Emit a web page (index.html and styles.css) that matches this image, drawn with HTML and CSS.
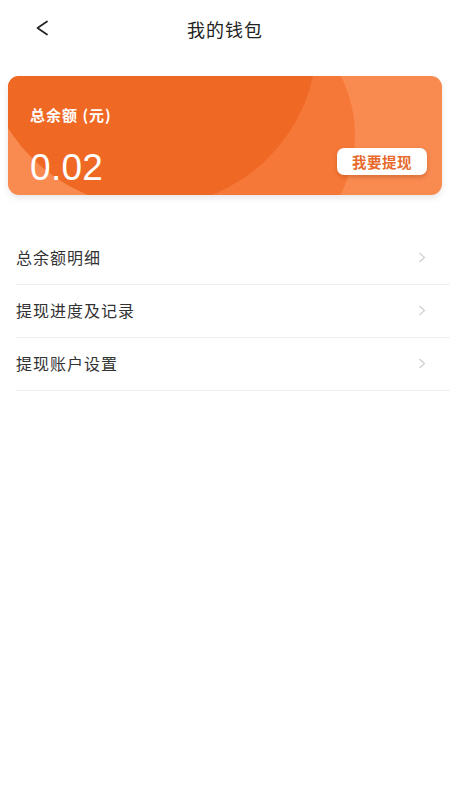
FILE: index.html
```html
<!DOCTYPE html>
<html lang="zh">
<head>
<meta charset="utf-8">
<title>我的钱包</title>
<link rel="stylesheet" href="styles.css">
</head>
<body>
<div class="page">
  <header class="topbar">
    <span class="back">
      <svg width="14" height="16" viewBox="0 0 14 16"><path d="M12 1.5 L2.5 8 L12 14.5" fill="none" stroke="#222" stroke-width="1.7" stroke-linecap="round" stroke-linejoin="round"/></svg>
    </span>
    <h1 class="title">我的钱包</h1>
  </header>

  <section class="card">
    <div class="blob blob-light"></div>
    <div class="blob blob-dark"></div>
    <div class="card-body">
      <div class="label">总余额 (元)</div>
      <div class="row-bottom">
        <div class="amount">0.02</div>
        <button class="withdraw">我要提现</button>
      </div>
    </div>
  </section>

  <ul class="menu">
    <li class="item"><span>总余额明细</span><svg class="arrow" width="8" height="11" viewBox="0 0 8 11"><path d="M1.5 1 L6.5 5.5 L1.5 10" fill="none" stroke="#cccccc" stroke-width="1.1"/></svg></li>
    <li class="item"><span>提现进度及记录</span><svg class="arrow" width="8" height="11" viewBox="0 0 8 11"><path d="M1.5 1 L6.5 5.5 L1.5 10" fill="none" stroke="#cccccc" stroke-width="1.1"/></svg></li>
    <li class="item"><span>提现账户设置</span><svg class="arrow" width="8" height="11" viewBox="0 0 8 11"><path d="M1.5 1 L6.5 5.5 L1.5 10" fill="none" stroke="#cccccc" stroke-width="1.1"/></svg></li>
  </ul>
</div>
</body>
</html>
```

FILE: styles.css
```css
* { box-sizing: border-box; }
html, body { margin: 0; padding: 0; background: #fff; }
body {
  font-family: "Noto Sans CJK SC", "Noto Sans", "Liberation Sans", sans-serif;
  color: #222;
}
.page { width: 450px; min-height: 800px; }

.topbar {
  height: 57px;
  display: flex;
  align-items: center;
  justify-content: center;
  position: relative;
}
.back {
  position: absolute;
  left: 35px;
  top: 20px;
  display: flex;
}
.title {
  margin: 0;
  font-size: 18px;
  font-weight: 400;
  color: #222;
  letter-spacing: 1px;
}

.card {
  margin: 19px 8px 0;
  height: 119px;
  border-radius: 11px;
  background: #f98b51;
  position: relative;
  overflow: hidden;
  box-shadow: 0 3px 6px rgba(120, 120, 140, 0.18);
}
.blob {
  position: absolute;
  border-radius: 50%;
}
.blob-light {
  width: 260px; height: 260px;
  left: 87px; top: -71px;
  background: #f67838;
}
.blob-dark {
  width: 334px; height: 334px;
  left: -25px; top: -203px;
  background: #ef6824;
}
.card-body {
  position: relative;
  height: 100%;
  padding: 29px 15px 0 22px;
  display: flex;
  flex-direction: column;
}
.label {
  color: #fff;
  font-size: 15px;
  font-weight: 700;
  line-height: 20px;
  letter-spacing: 1px;
}
.row-bottom {
  margin-top: 22px;
  display: flex;
  align-items: center;
  justify-content: space-between;
}
.amount {
  font-family: "Liberation Sans", Arial, sans-serif;
  color: #fff;
  font-size: 37px;
  line-height: 42px;
  letter-spacing: 0.3px;
}
.withdraw {
  width: 90px;
  height: 27px;
  border: none;
  border-radius: 7px;
  background: #fff;
  color: #e76a2c;
  font-family: "Noto Sans CJK SC", sans-serif;
  font-size: 14.5px;
  font-weight: 700;
  letter-spacing: 0.5px;
  padding: 0;
  margin-top: -14px;
  box-shadow: 0 2px 4px rgba(150, 60, 10, 0.35);
}

.menu {
  list-style: none;
  margin: 37px 0 0 16px;
  padding: 0;
}
.item {
  height: 53px;
  border-bottom: 1px solid #eeeeee;
  display: flex;
  align-items: center;
  justify-content: space-between;
  padding-right: 24px;
  padding-bottom: 2px;
  font-size: 16px;
  letter-spacing: 1px;
  color: #333;
}
.arrow { display: block; }
```
